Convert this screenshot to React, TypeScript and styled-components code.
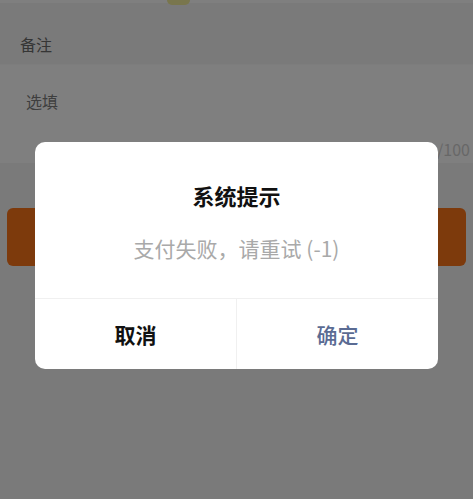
import React from "react";
import styled, { createGlobalStyle } from "styled-components";

const GlobalStyle = createGlobalStyle`
  html, body {
    margin: 0;
    padding: 0;
    height: 100%;
    background: #f5f5f5;
    font-family: "Noto Sans CJK SC", "Noto Sans", sans-serif;
  }
  #root {
    height: 100%;
  }
`;

const Page = styled.div`
  position: relative;
  height: 499px;
  overflow: hidden;
  background: #f5f5f5;
`;

const TopStrip = styled.div`
  height: 3px;
  background: #ffffff;
  position: relative;
`;

const Tab = styled.div`
  position: absolute;
  left: 167px;
  top: 0;
  width: 23px;
  height: 5px;
  border-radius: 0 0 8px 8px;
  background: #f2ec9a;
`;

const SectionTitle = styled.div`
  height: 62px;
  box-sizing: border-box;
  padding: 29px 0 0 20px;
  font-size: 16px;
  line-height: 24px;
  color: #6b6b6b;
  border-bottom: 1px solid #fafafa;
`;

const NoteBox = styled.div`
  height: 98px;
  box-sizing: border-box;
  background: #ffffff;
  padding: 24px 3px 0 26px;
  display: flex;
  flex-direction: column;
`;

const Placeholder = styled.div`
  font-size: 16px;
  line-height: 24px;
  color: #7c7c7c;
`;

const Counter = styled.div`
  margin-top: auto;
  margin-bottom: 3px;
  align-self: flex-end;
  font-size: 16px;
  line-height: 22px;
  color: #cfcfcf;
`;

const SubmitButton = styled.div`
  margin: 45px 7px 0;
  height: 58px;
  border-radius: 6px;
  background: #fb7418;
`;

const Mask = styled.div`
  position: absolute;
  inset: 0;
  background: rgba(0, 0, 0, 0.5);
`;

const Dialog = styled.div`
  position: absolute;
  left: 35px;
  top: 142px;
  width: 403px;
  height: 227px;
  border-radius: 10px;
  background: #ffffff;
  display: flex;
  flex-direction: column;
  overflow: hidden;
`;

const Body = styled.div`
  flex: 1;
  display: flex;
  flex-direction: column;
  align-items: center;
  padding-top: 38px;
  box-sizing: border-box;
  border-bottom: 1px solid #f0f0f0;
`;

const Title = styled.div`
  font-size: 22px;
  line-height: 30px;
  font-weight: 700;
  color: #111111;
`;

const Message = styled.div`
  margin-top: 23px;
  font-size: 21px;
  line-height: 30px;
  color: #a9a9a9;
`;

const Actions = styled.div`
  height: 70px;
  display: flex;
`;

const Action = styled.div<{ $primary?: boolean }>`
  flex: 1;
  display: flex;
  align-items: center;
  justify-content: center;
  font-size: 21px;
  font-weight: ${(p) => (p.$primary ? 500 : 700)};
  color: ${(p) => (p.$primary ? "#5a6b93" : "#111111")};
  & + & {
    border-left: 1px solid #f0f0f0;
  }
`;

export default function App() {
  return (
    <Page>
      <GlobalStyle />
      <TopStrip>
        <Tab />
      </TopStrip>
      <SectionTitle>备注</SectionTitle>
      <NoteBox>
        <Placeholder>选填</Placeholder>
        <Counter>0/100</Counter>
      </NoteBox>
      <SubmitButton />
      <Mask />
      <Dialog>
        <Body>
          <Title>系统提示</Title>
          <Message>支付失败，请重试 (-1)</Message>
        </Body>
        <Actions>
          <Action>取消</Action>
          <Action $primary>确定</Action>
        </Actions>
      </Dialog>
    </Page>
  );
}
